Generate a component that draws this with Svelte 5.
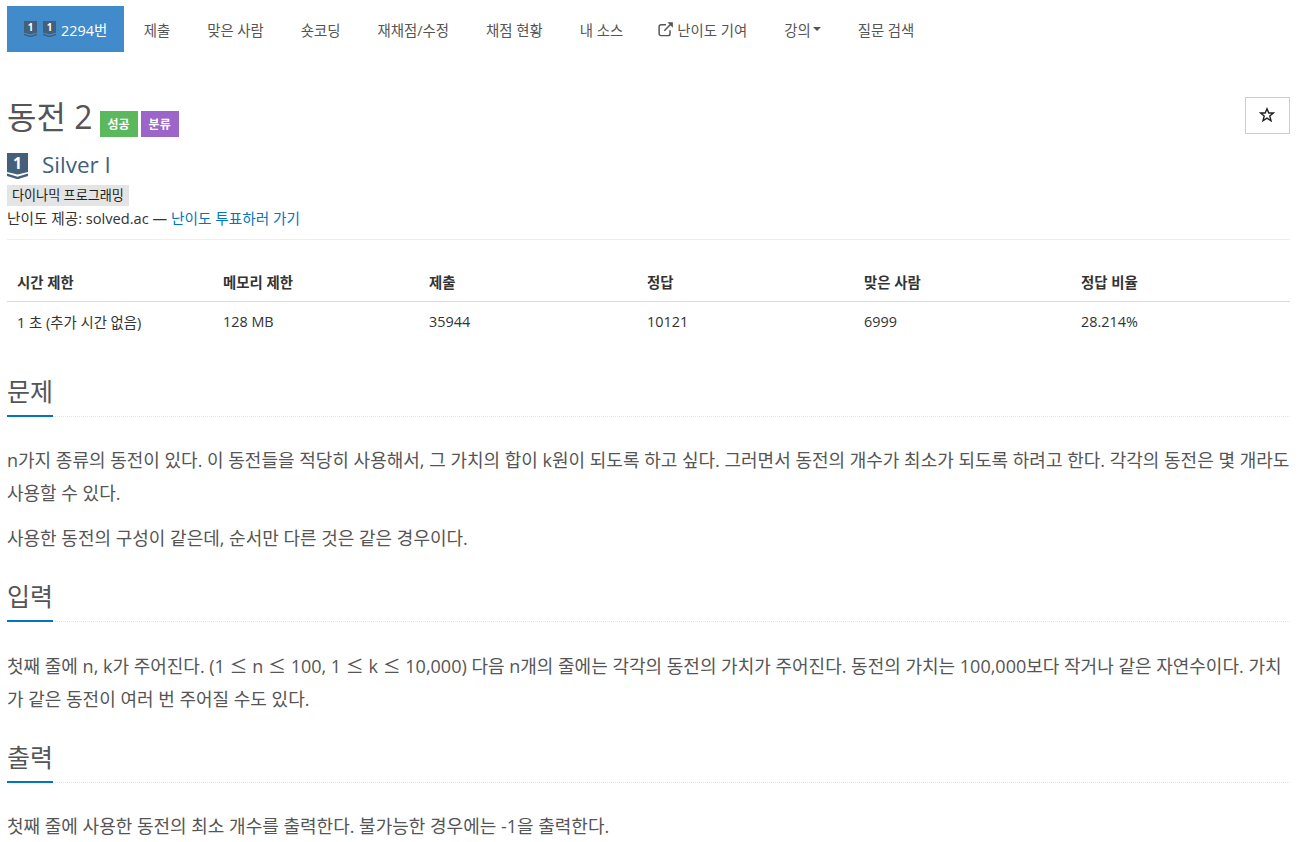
<script>
  const navItems = ["제출", "맞은 사람", "숏코딩", "재채점/수정", "채점 현황", "내 소스"];
  const stats = [
    { label: "시간 제한", value: "1 초 (추가 시간 없음)" },
    { label: "메모리 제한", value: "128 MB" },
    { label: "제출", value: "35944" },
    { label: "정답", value: "10121" },
    { label: "맞은 사람", value: "6999" },
    { label: "정답 비율", value: "28.214%" },
  ];
  const colWidths = [206, 206, 218, 217, 217, 219];
</script>

{#snippet tier(width)}
  <svg class="tier" width={width} height={width * 1.25} viewBox="0 0 20 25">
    <path d="M0 0H20V18L10 20.5L0 18Z" fill="#435F7A" />
    <path d="M0 19.5L10 22.5L20 19.5V22L10 25L0 22Z" fill="#435F7A" />
    <text x="10" y="15" text-anchor="middle" font-size="15" font-weight="700" font-family="Open Sans" fill="#fff">1</text>
  </svg>
{/snippet}

<div class="page">
  <ul class="nav">
    <li class="active">
      <span class="tiers">{@render tier(13)}{@render tier(13)}</span>
      2294번
    </li>
    {#each navItems as item}
      <li>{item}</li>
    {/each}
    <li>
      <svg class="ext" width="16" height="16" viewBox="0 0 14 14" fill="none" stroke="#555" stroke-width="1.3">
        <path d="M10.5 8V11.2A1.6 1.6 0 0 1 8.9 12.8H2.6A1.6 1.6 0 0 1 1 11.2V4.9A1.6 1.6 0 0 1 2.6 3.3H7" />
        <path d="M5.5 8.5L12 2" />
        <path d="M8.3 1.2H13V5.9Z" fill="#555" stroke="none" />
      </svg>
      난이도 기여
    </li>
    <li>강의<span class="caret"></span></li>
    <li>질문 검색</li>
  </ul>

  <div class="title-row">
    <h1>동전 2</h1>
    <span class="label green">성공</span>
    <span class="label purple">분류</span>
    <button class="star" aria-label="즐겨찾기">
      <svg width="16" height="16" viewBox="0 0 16 16" fill="none" stroke="#222" stroke-width="1.4">
        <path d="M8 1.8L9.8 6H14.4L10.8 9L12 13.8L8 11.2L4 13.8L5.2 9L1.6 6H6.2Z" />
      </svg>
    </button>
  </div>

  <div class="tier-row">
    {@render tier(21)}
    <span class="tier-name">Silver I</span>
  </div>
  <div class="tag-row"><span class="tag">다이나믹 프로그래밍</span></div>
  <div class="credit">난이도 제공: solved.ac — <span class="link">난이도 투표하러 가기</span></div>

  <table>
    <colgroup>
      {#each colWidths as w}<col style="width: {w}px" />{/each}
    </colgroup>
    <thead>
      <tr>
        {#each stats as s}<th>{s.label}</th>{/each}
      </tr>
    </thead>
    <tbody>
      <tr>
        {#each stats as s}<td>{s.value}</td>{/each}
      </tr>
    </tbody>
  </table>

  <section class="first">
    <div class="headline"><h2>문제</h2></div>
    <p>n가지 종류의 동전이 있다. 이 동전들을 적당히 사용해서, 그 가치의 합이 k원이 되도록 하고 싶다. 그러면서 동전의 개수가 최소가 되도록 하려고 한다. 각각의 동전은 몇 개라도 사용할 수 있다.</p>
    <p>사용한 동전의 구성이 같은데, 순서만 다른 것은 같은 경우이다.</p>
  </section>

  <section>
    <div class="headline"><h2>입력</h2></div>
    <p>첫째 줄에 n, k가 주어진다. (1 <span class="le">≤</span> n <span class="le">≤</span> 100, 1 <span class="le">≤</span> k <span class="le">≤</span> 10,000) 다음 n개의 줄에는 각각의 동전의 가치가 주어진다. 동전의 가치는 100,000보다 작거나 같은 자연수이다. 가치<br />가 같은 동전이 여러 번 주어질 수도 있다.</p>
  </section>

  <section>
    <div class="headline"><h2>출력</h2></div>
    <p>첫째 줄에 사용한 동전의 최소 개수를 출력한다. 불가능한 경우에는 -1을 출력한다.</p>
  </section>
</div>

<style>
  :global(body) {
    margin: 0;
    background: #fff;
  }

  .page {
    height: 842px;
    overflow: hidden;
    box-sizing: border-box;
    padding: 6px 13px 0 7px;
    font-family: "Open Sans", "Noto Sans CJK KR", sans-serif;
    font-size: 14.4px;
    color: #333;
  }

  .nav {
    display: flex;
    list-style: none;
    margin: 0;
    padding: 0;
    height: 46px;
  }

  .nav li {
    display: flex;
    align-items: center;
    padding: 0 18.5px;
    color: #555;
    white-space: nowrap;
  }

  .nav .active {
    background: #428bca;
    color: #fff;
    margin-right: 1px;
    padding: 0 17px;
  }

  .tiers {
    display: flex;
    gap: 6px;
    margin-right: 5px;
  }

  .ext {
    margin: 0 3px 0 -2px;
  }

  .caret {
    border-top: 4px solid #555;
    border-left: 4px solid transparent;
    border-right: 4px solid transparent;
    margin-left: 2px;
  }

  .title-row {
    display: flex;
    align-items: center;
    margin-top: 43px;
    height: 40px;
  }

  h1 {
    margin: 0 7px 0 0;
    font-size: 32px;
    font-weight: 400;
    color: #555;
  }

  .label {
    display: flex;
    align-items: center;
    height: 26px;
    margin: 18px 3px 0 0;
    padding: 0 8px;
    font-size: 12px;
    font-weight: 700;
    color: #fff;
  }

  .green {
    background: #5cb85c;
  }

  .purple {
    background: #9b65c9;
  }

  .star {
    margin-left: auto;
    width: 45px;
    height: 37px;
    padding: 0 2px 0 0;
    display: flex;
    align-items: center;
    justify-content: center;
    background: #fff;
    border: 1px solid #ccc;
  }

  .tier-row {
    display: flex;
    align-items: center;
    gap: 14px;
    margin-top: 15px;
    font-size: 22.5px;
    color: #435f7a;
    height: 32px;
  }

  .tier-name {
    margin-top: -4px;
  }

  .tag-row {
    margin-top: 3px;
    height: 22px;
    display: flex;
  }

  .tag {
    display: block;
    padding: 0 5px;
    height: 21px;
    line-height: 21px;
    font-size: 13.1px;
    color: #222;
    background: #e4e4e4;
  }

  .credit {
    height: 22px;
    line-height: 22px;
    font-size: 14.65px;
    color: #333;
    padding-bottom: 10px;
    border-bottom: 1px solid #eee;
  }

  .link {
    color: #0076c0;
  }

  table {
    width: 100%;
    margin-top: 21px;
    border-collapse: collapse;
    table-layout: fixed;
  }

  th {
    height: 40px;
    padding: 0 10px;
    text-align: left;
    font-weight: 700;
    color: #333;
    border-bottom: 1px solid #ddd;
  }

  td {
    height: 39px;
    padding: 0 10px;
    color: #333;
  }

  section {
    margin-top: 25px;
  }

  section.first {
    margin-top: 34px;
  }

  .headline {
    display: flex;
    border-bottom: 1px dotted #e5e5e5;
    margin-bottom: 27px;
    height: 41px;
  }

  h2 {
    box-sizing: border-box;
    margin: 0;
    height: 42px;
    font-size: 25px;
    font-weight: 400;
    line-height: 32px;
    color: #555;
    border-bottom: 2px solid #0076c0;
  }

  p {
    margin: 0 0 12px;
    font-size: 18px;
    line-height: 33px;
    color: #555;
  }

  .le {
    font-family: "Noto Sans CJK KR", sans-serif;
  }
</style>
